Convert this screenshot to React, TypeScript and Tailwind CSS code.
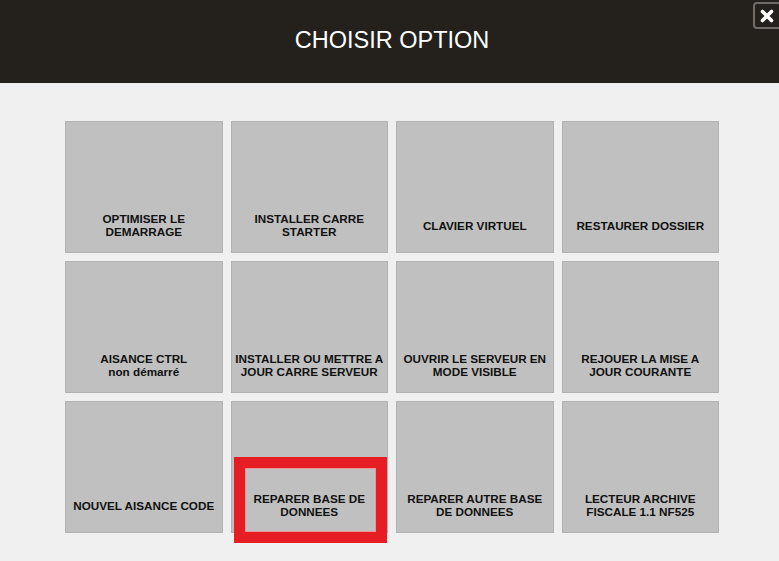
import React from "react";

const tiles: string[][] = [
  ["OPTIMISER LE", "DEMARRAGE"],
  ["INSTALLER CARRE", "STARTER"],
  ["CLAVIER VIRTUEL"],
  ["RESTAURER DOSSIER"],
  ["AISANCE CTRL", "non démarré"],
  ["INSTALLER OU METTRE A", "JOUR CARRE SERVEUR"],
  ["OUVRIR LE SERVEUR EN", "MODE VISIBLE"],
  ["REJOUER LA MISE A", "JOUR COURANTE"],
  ["NOUVEL AISANCE CODE"],
  ["REPARER BASE DE", "DONNEES"],
  ["REPARER AUTRE BASE", "DE DONNEES"],
  ["LECTEUR ARCHIVE", "FISCALE 1.1 NF525"],
];

export default function App() {
  return (
    <div
      className="relative w-[779px] min-h-[561px] bg-[#f0f0f0] overflow-hidden"
      style={{ fontFamily: '"Liberation Sans", Arial, sans-serif' }}
    >
      <div className="h-[83px] bg-[#24201b] pt-[28px] text-center">
        <div className="text-[23.5px] leading-[24px] text-white pl-[5px]">CHOISIR OPTION</div>
      </div>

      <button className="absolute left-[753px] top-[2px] w-[29px] h-[27px] border-2 border-[#6e6b68] rounded-[4px] bg-[#24201b] flex items-center justify-center">
        <svg width="14" height="14" viewBox="0 0 14 14" className="ml-[-1px] mt-[1px]">
          <path d="M2.5 2.5 L11.5 11.5 M11.5 2.5 L2.5 11.5" stroke="#ffffff" strokeWidth="3.6" strokeLinecap="round" />
        </svg>
      </button>

      <div className="pt-[38px] pl-[65px]">
        <div className="grid grid-cols-4 gap-x-[8px] gap-y-[8px] w-[654px]">
          {tiles.map((lines, i) => (
            <div
              key={i}
              className="h-[132px] box-border border border-[#b2b2b2] bg-[#c0c0c0] flex flex-col"
            >
              <div className="flex-1" />
              <div className="h-[53px] pb-[1px] flex flex-col items-center justify-center text-center text-[11.7px] leading-[13px] font-bold text-[#111111]">
                {lines.map((l, j) => (
                  <div key={j} className="whitespace-nowrap">{l}</div>
                ))}
              </div>
            </div>
          ))}
        </div>
      </div>

      <div className="absolute left-[234px] top-[457px] w-[153px] h-[86px] border-[11px] border-[#e61d23]">
        <div className="w-full h-full border border-[#e69a9c]" />
      </div>
    </div>
  );
}
